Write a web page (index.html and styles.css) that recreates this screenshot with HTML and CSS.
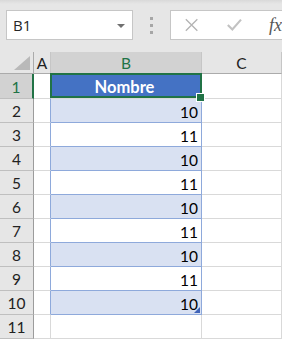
FILE: index.html
```html
<!DOCTYPE html>
<html lang="fr">
<head>
    <meta charset="UTF-8">
    <meta name="viewport" content="width=device-width, initial-scale=1.0">
    <title>Feuille</title>
    <link rel="stylesheet" href="styles.css">
</head>
<body>
    <div class="app">
        <div class="formula-bar">
            <div class="name-box">
                <span class="cell-ref">B1</span>
                <span class="caret"></span>
            </div>
            <div class="grip"><i></i><i></i><i></i></div>
            <div class="formula-input">
                <svg class="icon-cancel" width="16" height="16" viewBox="0 0 16 16">
                    <path d="M1 1 L15 15 M15 1 L1 15" stroke="#b4b4b4" stroke-width="1.6" fill="none"/>
                </svg>
                <svg class="icon-enter" width="18" height="16" viewBox="0 0 18 16">
                    <path d="M1 8 L6.5 13.5 L17 1.5" stroke="#c2c2c2" stroke-width="2.6" fill="none"/>
                </svg>
                <span class="fx">fx</span>
            </div>
        </div>

        <div class="sheet">
            <div class="corner">
                <svg width="16" height="14" viewBox="0 0 16 14"><polygon points="0,14 16,14 16,0" fill="#b9b9b9"/></svg>
            </div>
            <div class="col-head">A</div>
            <div class="col-head is-active">B</div>
            <div class="col-head">C</div>

            <div class="row-head is-active">1</div>
            <div class="cell tbl-edge"></div>
            <div class="cell tbl-head is-selected">Nombre</div>
            <div class="cell"></div>

            <div class="row-head">2</div>
            <div class="cell tbl-edge"></div>
            <div class="cell tbl band">10</div>
            <div class="cell"></div>

            <div class="row-head">3</div>
            <div class="cell tbl-edge"></div>
            <div class="cell tbl">11</div>
            <div class="cell"></div>

            <div class="row-head">4</div>
            <div class="cell tbl-edge"></div>
            <div class="cell tbl band">10</div>
            <div class="cell"></div>

            <div class="row-head">5</div>
            <div class="cell tbl-edge"></div>
            <div class="cell tbl">11</div>
            <div class="cell"></div>

            <div class="row-head">6</div>
            <div class="cell tbl-edge"></div>
            <div class="cell tbl band">10</div>
            <div class="cell"></div>

            <div class="row-head">7</div>
            <div class="cell tbl-edge"></div>
            <div class="cell tbl">11</div>
            <div class="cell"></div>

            <div class="row-head">8</div>
            <div class="cell tbl-edge"></div>
            <div class="cell tbl band">10</div>
            <div class="cell"></div>

            <div class="row-head">9</div>
            <div class="cell tbl-edge"></div>
            <div class="cell tbl">11</div>
            <div class="cell"></div>

            <div class="row-head">10</div>
            <div class="cell tbl-edge"></div>
            <div class="cell tbl band tbl-last">10</div>
            <div class="cell"></div>

            <div class="row-head">11</div>
            <div class="cell"></div>
            <div class="cell"></div>
            <div class="cell"></div>
        </div>
    </div>
</body>
</html>
```

FILE: styles.css
```css
* {
    margin: 0;
    padding: 0;
    box-sizing: border-box;
}

body {
    font-family: Lato, "Liberation Sans", sans-serif;
    background: #ffffff;
    width: 282px;
    height: 339px;
    overflow: hidden;
}

.app {
    width: 282px;
    height: 339px;
    overflow: hidden;
}

/* formula bar */

.formula-bar {
    height: 52px;
    background: linear-gradient(#d9d9d9, #e6e6e6 4px);
    display: flex;
    align-items: flex-start;
    padding: 10px 0 0 6px;
}

.name-box {
    width: 127px;
    height: 30px;
    background: white;
    border: 1px solid #c6c6c6;
    display: flex;
    align-items: center;
    justify-content: space-between;
    padding: 0 7px 0 6px;
}

.cell-ref {
    font-family: "Open Sans", sans-serif;
    font-size: 15px;
    color: #262626;
}

.caret {
    width: 0;
    height: 0;
    border-left: 4px solid transparent;
    border-right: 4px solid transparent;
    border-top: 4px solid #707070;
    margin-top: 1px;
}

.grip {
    width: 37px;
    height: 30px;
    display: flex;
    flex-direction: column;
    align-items: center;
    justify-content: center;
    gap: 4px;
}

.grip i {
    display: block;
    width: 3px;
    height: 3px;
    background: #a6a6a6;
}

.formula-input {
    flex: 1;
    height: 30px;
    background: white;
    border: 1px solid #c6c6c6;
    border-right: none;
    display: flex;
    align-items: center;
    padding-left: 14px;
    white-space: nowrap;
    overflow: hidden;
}

.icon-enter {
    margin-left: 29px;
}

.fx {
    margin-left: 27px;
    font-family: "Liberation Serif", serif;
    font-style: italic;
    font-size: 18px;
    color: #555;
}

/* sheet grid */

.sheet {
    display: grid;
    grid-template-columns: 34px 17px 151px 1fr;
    grid-template-rows: 22px 25px;
    grid-auto-rows: 24px;
    font-size: 15.5px;
    color: #000;
}

.corner,
.col-head,
.row-head {
    background: #e6e6e6;
    border-right: 1px solid #ababab;
    border-bottom: 1px solid #ababab;
    color: #222;
}

.corner {
    display: flex;
    align-items: flex-end;
    justify-content: flex-end;
    padding: 0 3px 3px 0;
}

.col-head {
    display: flex;
    align-items: center;
    justify-content: center;
    font-size: 15.5px;
    border-right-color: #c6c6c6;
}

.col-head.is-active {
    background: #d2d2d2;
    color: #217346;
}

.row-head {
    display: flex;
    align-items: center;
    justify-content: center;
    font-size: 15.5px;
    border-bottom-color: #bfbfbf;
    border-right-color: #9c9c9c;
    padding-top: 1px;
}

.row-head.is-active {
    background: #d2d2d2;
    color: #217346;
    border-right: 2px solid #217346;
}

.cell {
    border-right: 1px solid #d9d9d9;
    border-bottom: 1px solid #d9d9d9;
    display: flex;
    align-items: center;
    justify-content: flex-end;
    padding: 2px 3px 0 0;
}

.cell.tbl-edge {
    border-right-color: #8ea9db;
}

.cell.tbl {
    border-right-color: #8ea9db;
    border-bottom-color: #8ea9db;
}

.cell.band {
    background: #d9e1f2;
}

.tbl-head {
    background: #4472c4;
    color: white;
    font-weight: bold;
    font-size: 16.5px;
    justify-content: center;
    position: relative;
}

.is-selected::before {
    content: "";
    position: absolute;
    left: -1px;
    top: -1px;
    right: -1px;
    bottom: 0;
    border: 2px solid #217346;
}

.is-selected::after {
    content: "";
    position: absolute;
    right: -4px;
    bottom: -4px;
    width: 7px;
    height: 7px;
    background: #217346;
    border: 1px solid white;
}

.tbl-last {
    position: relative;
}

.tbl-last::after {
    content: "";
    position: absolute;
    right: 1px;
    bottom: 1px;
    width: 6px;
    height: 6px;
    background: #3f63b8;
    clip-path: polygon(100% 0, 100% 100%, 0 100%);
}
```
